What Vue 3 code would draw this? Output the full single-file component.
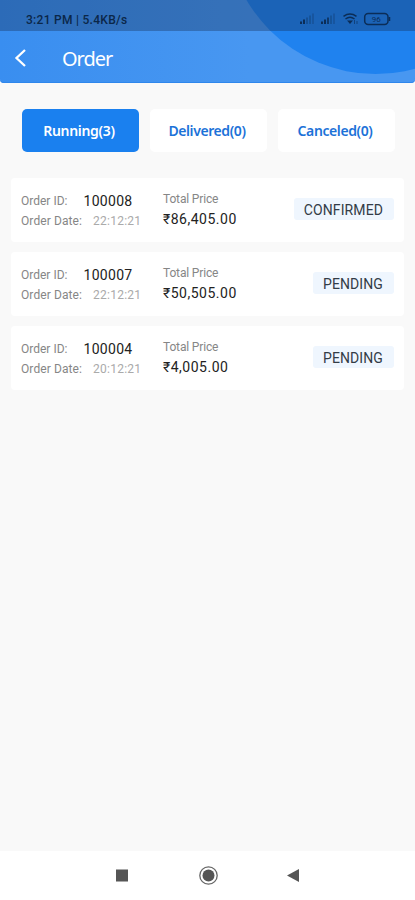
<script setup>
const tabs = [
  { label: 'Running', count: 3, active: true },
  { label: 'Delivered', count: 0 },
  { label: 'Canceled', count: 0 },
]
const orders = [
  { id: '100008', date: '22:12:21', price: '₹86,405.00', status: 'CONFIRMED' },
  { id: '100007', date: '22:12:21', price: '₹50,505.00', status: 'PENDING' },
  { id: '100004', date: '20:12:21', price: '₹4,005.00', status: 'PENDING' },
]
</script>

<template>
  <div class="screen">
    <header class="header">
      <div class="circle"></div>
      <div class="status">
        <span class="clock">3:21 PM | 5.4KB/s</span>
        <svg class="indicators" width="94" height="16" viewBox="0 0 94 16">
          <g v-for="x in [0, 21]" :key="x" :transform="`translate(${x} 0)`" fill="#0b2d57">
            <rect x="1" y="10.5" width="2" height="2.5" />
            <rect x="4" y="8.5" width="2" height="4.5" />
            <rect x="7" y="6.5" width="2" height="6.5" :opacity="x ? 0.8 : 0.35" />
            <rect x="10" y="4.5" width="2" height="8.5" opacity=".3" />
            <rect x="13" y="2.5" width="2" height="10.5" opacity=".25" />
          </g>
          <g fill="none" stroke="#0b2d57" stroke-width="1.5">
            <path d="M44.500 5.400Q51 .8 57.500 5.400M46.500 8Q51 4.600 55.500 8" />
            <path d="M48 9.500h6l-3 3.500z" fill="#0b2d57" stroke="none" />
            <path d="M55.500 9v4M58 10v3" stroke-width="1" opacity=".6" />
            <rect x="65.700" y="2.600" width="23.300" height="10.800" rx="3.500" />
            <path d="M90.500 6v4" />
          </g>
          <text x="77.300" y="10.800" class="charge">96</text>
        </svg>
      </div>
      <div class="bar">
        <svg class="back" width="14" height="20" viewBox="0 0 14 20">
          <path d="M12 2L3.500 10L12 18" fill="none" stroke="#fff" stroke-width="2.300" />
        </svg>
        <h1 class="title">Order</h1>
      </div>
    </header>

    <nav class="tabs">
      <button v-for="t in tabs" :key="t.label" class="tab" :class="{ active: t.active }">{{ t.label }}({{ t.count }})</button>
    </nav>

    <main class="list">
      <article v-for="o in orders" :key="o.id" class="card">
        <div class="info">
          <div class="line"><span class="label id-label">Order ID:</span><span class="id">{{ o.id }}</span></div>
          <div class="line"><span class="label date-label">Order Date:</span><span class="date">{{ o.date }}</span></div>
        </div>
        <div class="total">
          <div class="line label">Total Price</div>
          <div class="line price">{{ o.price }}</div>
        </div>
        <span class="badge">{{ o.status }}</span>
      </article>
    </main>

    <footer class="navbar">
      <svg width="200" height="24" viewBox="0 0 200 24">
        <rect x="8" y="5.500" width="12" height="12" fill="#555" />
        <circle cx="100.500" cy="11.500" r="8.700" fill="none" stroke="#666" stroke-width="1.300" />
        <circle cx="100.500" cy="11.500" r="6" fill="#555" />
        <path d="M179 11.500L191 5V18Z" fill="#555" />
      </svg>
    </footer>
  </div>
</template>

<style>
body { margin: 0; }
</style>

<style scoped>
.screen {
  width: 415px;
  height: 900px;
  display: flex;
  flex-direction: column;
  background: #f9f9f9;
  font-family: Roboto, "Noto Sans", sans-serif;
  overflow: hidden;
}
.header {
  position: relative;
  height: 83px;
  flex: none;
  overflow: hidden;
  background: linear-gradient(90deg, #398ef0, #4897f1 60%);
  border-radius: 0 0 4px 4px;
  box-shadow: inset 0 -1px #2f87ec;
}
.circle {
  position: absolute;
  left: 225.500px;
  top: -225px;
  width: 299px;
  height: 299px;
  border-radius: 50%;
  background: #1f82ef;
}
.status {
  position: relative;
  height: 31px;
  box-sizing: border-box;
  padding: 9px 22px 0 26px;
  display: flex;
  justify-content: space-between;
  background: rgba(20, 40, 75, .34);
}
.clock {
  font-size: 12px;
  line-height: 22px;
  letter-spacing: .28px;
  color: #0b2748;
  font-weight: 500;
  white-space: nowrap;
}
.indicators { margin-top: 2px; }
.charge {
  font: 8px Roboto, sans-serif;
  fill: #0b2d57;
  text-anchor: middle;
}
.bar {
  position: relative;
  display: flex;
  align-items: center;
  height: 54px;
  padding-left: 13px;
}
.title {
  margin: 2px 0 0 35px;
  font: 400 20px/28px "Noto Sans", sans-serif;
  letter-spacing: -1px;
  color: #fff;
}
.tabs {
  display: grid;
  grid-template-columns: 117px 117px 117px;
  column-gap: 11px;
  padding: 26px 20px 0 21.500px;
}
.tab {
  height: 43px;
  padding: 0 2px 0 0;
  border: 0;
  border-radius: 5px;
  background: #fff;
  color: #1c72d8;
  font: 600 14px/43px "Noto Sans", sans-serif;
  letter-spacing: -.3px;
}
.tab:not(.active) { letter-spacing: -.4px; }
.tab.active { background: #1a80ef; color: #fff; }
.list {
  flex: 1;
  display: flex;
  flex-direction: column;
  gap: 10px;
  padding: 26px 11px 0;
}
.card {
  height: 64px;
  box-sizing: border-box;
  display: flex;
  padding: 0 10px;
  border-radius: 4px;
  background: #fff;
}
.info { width: 142px; padding-top: 12.500px; }
.total { flex: 1; padding-top: 10.500px; }
.line {
  display: flex;
  align-items: center;
  height: 20.500px;
  white-space: nowrap;
}
.label { font-size: 12px; color: #868686; }
.total .label { letter-spacing: -.15px; }
.id-label { width: 62.500px; }
.date-label { width: 72px; letter-spacing: .1px; }
.id { font-size: 14px; letter-spacing: .3px; color: #222; }
.date { font-size: 12px; letter-spacing: .25px; color: #aaa; }
.price { font-size: 14px; letter-spacing: .5px; color: #222; }
.badge {
  align-self: flex-start;
  margin-top: 20px;
  height: 22px;
  padding: 0 11px 0 10px;
  border-radius: 3px;
  background: #eff6fe;
  color: #333c46;
  font-size: 14px;
  line-height: 24px;
  letter-spacing: .1px;
}
.navbar {
  height: 49px;
  flex: none;
  display: flex;
  align-items: center;
  justify-content: center;
  background: #fff;
}
</style>
